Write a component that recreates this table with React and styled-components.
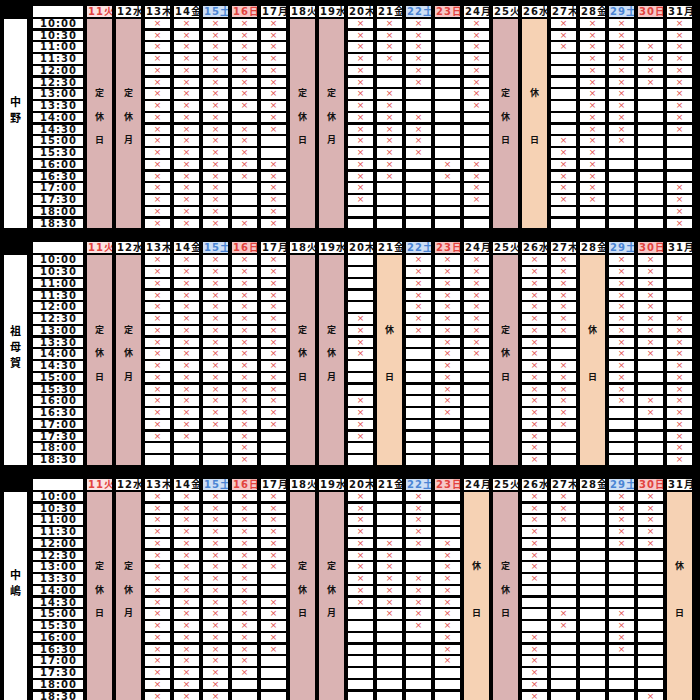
import React from 'react';
import styled, { createGlobalStyle } from 'styled-components';

const GlobalStyle = createGlobalStyle`
  html, body {
    margin: 0;
    padding: 0;
    background: #000;
    overflow: hidden;
  }
  body {
    font-family: "DejaVu Sans", "Noto Sans CJK JP", sans-serif;
  }
`;

const times = [
  '10:00', '10:30', '11:00', '11:30', '12:00', '12:30', '13:00', '13:30', '14:00',
  '14:30', '15:00', '15:30', '16:00', '16:30', '17:00', '17:30', '18:00', '18:30',
];

const days = [
  { d: 11, w: '火', kind: 'holiday' },
  { d: 12, w: '水' },
  { d: 13, w: '木' },
  { d: 14, w: '金' },
  { d: 15, w: '土', kind: 'sat' },
  { d: 16, w: '日', kind: 'sun' },
  { d: 17, w: '月' },
  { d: 18, w: '火' },
  { d: 19, w: '水' },
  { d: 20, w: '木' },
  { d: 21, w: '金' },
  { d: 22, w: '土', kind: 'sat' },
  { d: 23, w: '日', kind: 'sun' },
  { d: 24, w: '月' },
  { d: 25, w: '火' },
  { d: 26, w: '水' },
  { d: 27, w: '木' },
  { d: 28, w: '金' },
  { d: 29, w: '土', kind: 'sat' },
  { d: 30, w: '日', kind: 'sun' },
  { d: 31, w: '月' },
];

// 'T日' / 'T月' = 定休 column, 'K' = 休日 column, otherwise one char per time slot (x = ×)
const ALL = 'xxxxxxxxxxxxxxxxxx';
const shops = [
  {
    name: '中野',
    cols: [
      'T日', 'T月', ALL, ALL, ALL,
      'xxxxxxxx.xxxxx...x',
      'xxxxxxxxxx..xxxxxx',
      'T日', 'T月',
      'xxxxxxxxxxxxxxxx..',
      'xxxx..xxxxxxxx....',
      'xxxxxx..xxxx......',
      '............xx....',
      'xxxxxxxx....xxxx..',
      'T日', 'K',
      'xxx.......xxxxxx..',
      'xxxxxxxxxxxxxxxx..',
      'xxxxxxxxxxx.......',
      '..xxxx............',
      'xxxxxxxxxx....xxxx',
    ],
  },
  {
    name: '祖母賀',
    cols: [
      'T日', 'T月',
      'xxxxxxxxxxxxxxxx..',
      'xxxxxxxxxxxxxxxx..',
      'xxxxxxxxxxxxxxx...',
      ALL,
      'xxxxxxxxxxxxxxx...',
      'T日', 'T月',
      '.....xxxx...xxxx..',
      'K',
      'xxxxxxx...........',
      'xxxxxxxxxxxxxx....',
      'xxxxxxxxx.........',
      'T日',
      ALL,
      'xxxxxxx..xxxxxx...',
      'K',
      'xxxxxxxxxxxxx.....',
      'xxxxxxxxx...xx....',
      '.....xxxxxxxxxxxxx',
    ],
  },
  {
    name: '中嶋',
    cols: [
      'T日', 'T月', ALL, ALL, ALL,
      'xxxxxxxxxxxxxxxx..',
      'xxxxxxx..xxxxx....',
      'T日', 'T月',
      'xxxxxxxxxx........',
      '....xxxxxxx.......',
      'xxxxx..xxxxx......',
      '....xxxxxxxxxxx...',
      'K',
      'T日',
      'xxxxxxxx....xxxxxx',
      'xxx.......xx......',
      '..................',
      'xxxxx.....xxxx....',
      'xxxxx............x',
      'K',
    ],
  },
];

const headTone = {
  plain: { bg: '#ffffff', fg: '#111111' },
  holiday: { bg: '#fbe2e2', fg: '#e2433f' },
  sat: { bg: '#cddff5', fg: '#4b85d4' },
  sun: { bg: '#f6c8c8', fg: '#e2433f' },
};

const ROW_H = '9.5px';
const ROW_GAP = '2.25px';

const Page = styled.div`
  display: flex;
  flex-direction: column;
  gap: 14px;
  padding: 5.5px 0 0 4px;
`;

const Block = styled.div`
  display: grid;
  grid-template-columns: 25px 50px repeat(21, 25px);
  grid-template-rows: 11px repeat(18, ${ROW_H});
  column-gap: 4px;
  row-gap: ${ROW_GAP};
`;

const PlaceLabel = styled.div`
  grid-column: 1;
  grid-row: 2 / 20;
  width: 23px;
  background: #fff;
  display: flex;
  flex-direction: column;
  align-items: center;
  justify-content: center;
  padding-bottom: 24px;
  box-sizing: border-box;
  font-size: 11px;
  font-weight: bold;
  line-height: 16px;
  color: #000;
`;

const TimeHead = styled.div`
  grid-column: 2;
  grid-row: 1;
  background: #fff;
`;

const TimeCell = styled.div`
  grid-column: 2;
  grid-row: ${(p) => p.row};
  background: #fff;
  display: flex;
  align-items: center;
  justify-content: center;
  font-size: 10px;
  font-weight: bold;
  letter-spacing: 1px;
  line-height: ${ROW_H};
  color: #111;
  padding-left: 1px;
`;

const DayHead = styled.div`
  grid-column: ${(p) => p.col};
  grid-row: 1;
  background: ${(p) => headTone[p.kind].bg};
  color: ${(p) => headTone[p.kind].fg};
  font-size: 10px;
  font-weight: bold;
  letter-spacing: 1px;
  line-height: 11px;
  white-space: nowrap;
  overflow: hidden;
  padding-left: 1px;
`;

const SlotCell = styled.div`
  grid-column: ${(p) => p.col};
  grid-row: ${(p) => p.row};
  background: #fff;
  display: flex;
  align-items: center;
  justify-content: center;
  color: #e25050;
  font-size: 9px;
  line-height: ${ROW_H};
`;

const ClosedColumn = styled.div`
  grid-column: ${(p) => p.col};
  grid-row: 2 / 20;
  background: ${(p) => (p.tone === 'rest' ? '#f6d2b4' : '#dab3b3')};
  display: grid;
  grid-template-rows: repeat(18, ${ROW_H});
  row-gap: ${ROW_GAP};
  justify-items: center;
`;

const ClosedChar = styled.span`
  grid-row: ${(p) => p.row};
  font-size: 9px;
  font-weight: bold;
  line-height: ${ROW_H};
  color: #111;
`;

const DayColumn = ({ col, code }) => {
  if (code[0] === 'T') {
    return (
      <ClosedColumn col={col}>
        <ClosedChar row={7}>定</ClosedChar>
        <ClosedChar row={9}>休</ClosedChar>
        <ClosedChar row={11}>{code[1]}</ClosedChar>
      </ClosedColumn>
    );
  }
  if (code === 'K') {
    return (
      <ClosedColumn col={col} tone="rest">
        <ClosedChar row={7}>休</ClosedChar>
        <ClosedChar row={11}>日</ClosedChar>
      </ClosedColumn>
    );
  }
  return code.split('').map((c, i) => (
    <SlotCell key={i} col={col} row={i + 2}>
      {c === 'x' ? '×' : ''}
    </SlotCell>
  ));
};

const ShopBlock = ({ shop }) => (
  <Block>
    <TimeHead />
    {days.map((day, idx) => (
      <DayHead key={day.d} col={idx + 3} kind={day.kind || 'plain'}>
        {day.d}
        {day.w}
      </DayHead>
    ))}
    <PlaceLabel>
      {shop.name.split('').map((ch) => (
        <span key={ch}>{ch}</span>
      ))}
    </PlaceLabel>
    {times.map((t, i) => (
      <TimeCell key={t} row={i + 2}>
        {t}
      </TimeCell>
    ))}
    {shop.cols.map((code, idx) => (
      <DayColumn key={days[idx].d} col={idx + 3} code={code} />
    ))}
  </Block>
);

export default function App() {
  return (
    <>
      <GlobalStyle />
      <Page>
        {shops.map((shop) => (
          <ShopBlock key={shop.name} shop={shop} />
        ))}
      </Page>
    </>
  );
}
